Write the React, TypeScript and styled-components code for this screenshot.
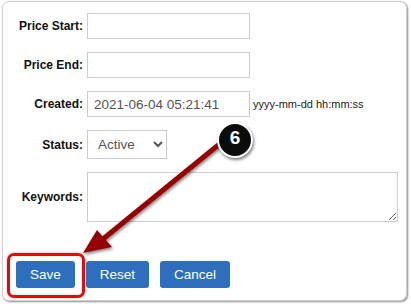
import React from 'react';
import styled, { createGlobalStyle } from 'styled-components';

const GlobalStyle = createGlobalStyle`
  body {
    margin: 0;
    background: #fff;
    font-family: "Liberation Sans", Arial, sans-serif;
  }
`;

const Page = styled.div`
  position: relative;
  width: 411px;
  height: 304px;
  overflow: hidden;
`;

const Frame = styled.div`
  box-sizing: border-box;
  margin: 1px 0 0 2px;
  width: 405px;
  height: 300px;
  border: 1px solid #cfcfcf;
  border-radius: 7px;
  box-shadow: 1px 1px 2px rgba(0, 0, 0, 0.45);
  background: #fff;
`;

const Form = styled.form`
  display: grid;
  grid-template-columns: 80px auto;
  column-gap: 4px;
  row-gap: 13px;
  padding-top: 11px;
  align-items: center;
`;

const Label = styled.label`
  text-align: right;
  font-size: 12px;
  font-weight: bold;
  color: #111;
`;

const FieldLine = styled.div`
  display: flex;
  align-items: center;
`;

const TextInput = styled.input`
  box-sizing: border-box;
  width: 163px;
  height: 26px;
  border: 1px solid #cccccc;
  padding: 0 6px;
  font-family: "Liberation Sans", Arial, sans-serif;
  font-size: 13.5px;
  color: #555;
  outline: none;
`;

const Hint = styled.span`
  margin-left: 3px;
  font-size: 11px;
  color: #222;
`;

const Select = styled.select`
  box-sizing: border-box;
  width: 80px;
  height: 29px;
  border: 1px solid #cccccc;
  border-radius: 0;
  padding: 0 0 0 6px;
  background: #fff;
  font-family: "Liberation Sans", Arial, sans-serif;
  font-size: 13.5px;
  color: #555;
  outline: none;
`;

const TextArea = styled.textarea`
  box-sizing: border-box;
  width: 311px;
  height: 50px;
  border: 1px solid #cccccc;
  resize: both;
  font-family: "Liberation Sans", Arial, sans-serif;
  outline: none;
`;

const Buttons = styled.div`
  display: flex;
  gap: 11px;
  margin-top: 39px;
  padding-left: 13px;
`;

const Button = styled.button`
  height: 27px;
  padding: 0 14px;
  border: none;
  border-radius: 3px;
  background: #2d6fbc;
  color: #fff;
  font-family: "Liberation Sans", Arial, sans-serif;
  font-size: 13.5px;
`;

const Overlay = styled.svg`
  position: absolute;
  left: 0;
  top: 0;
  pointer-events: none;
`;

const Highlight = styled.div`
  position: absolute;
  left: 7px;
  top: 253px;
  width: 78px;
  height: 45px;
  box-sizing: border-box;
  border: 3px solid #e20a0a;
  border-radius: 7px;
  box-shadow: 0 0 2px rgba(0, 0, 0, 0.35);
`;

const Badge = styled.div`
  position: absolute;
  left: 217px;
  top: 122px;
  width: 36px;
  height: 36px;
  box-sizing: border-box;
  border: 2px solid #fff;
  border-radius: 50%;
  background: #0c0c0c;
  box-shadow: 1px 2px 3px rgba(0, 0, 0, 0.5);
  color: #fff;
  font-size: 19px;
  font-weight: bold;
  display: flex;
  align-items: center;
  justify-content: center;
  padding-bottom: 5px;
`;

const App: React.FC = () => {
  return (
    <Page>
      <GlobalStyle />
      <Frame>
        <Form>
          <Label>Price Start:</Label>
          <FieldLine><TextInput /></FieldLine>

          <Label>Price End:</Label>
          <FieldLine><TextInput /></FieldLine>

          <Label>Created:</Label>
          <FieldLine>
            <TextInput defaultValue="2021-06-04 05:21:41" />
            <Hint>yyyy-mm-dd hh:mm:ss</Hint>
          </FieldLine>

          <Label>Status:</Label>
          <FieldLine>
            <Select defaultValue="Active">
              <option>Active</option>
              <option>Inactive</option>
            </Select>
          </FieldLine>

          <Label>Keywords:</Label>
          <FieldLine><TextArea /></FieldLine>
        </Form>
        <Buttons>
          <Button type="button">Save</Button>
          <Button type="button">Reset</Button>
          <Button type="button">Cancel</Button>
        </Buttons>
      </Frame>

      <Highlight />
      <Overlay width="411" height="304" viewBox="0 0 411 304">
        <defs>
          <filter id="arrowShadow" x="-20%" y="-20%" width="140%" height="140%">
            <feDropShadow dx="1" dy="2" stdDeviation="1.5" floodColor="#000" floodOpacity="0.45" />
          </filter>
        </defs>
        <g filter="url(#arrowShadow)">
          <line x1="222" y1="142" x2="103" y2="239" stroke="#960000" strokeWidth="5" />
          <polygon points="83,253 97,230 112,247" fill="#960000" />
        </g>
      </Overlay>
      <Badge>6</Badge>
    </Page>
  );
};

export default App;
